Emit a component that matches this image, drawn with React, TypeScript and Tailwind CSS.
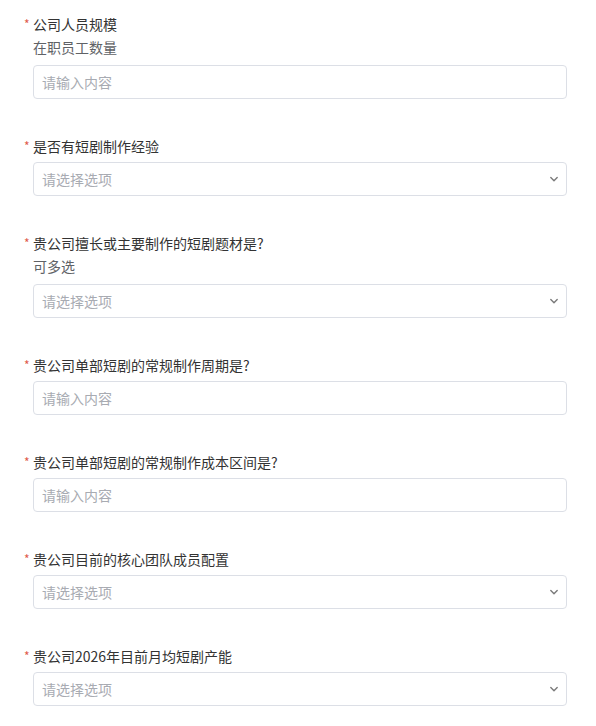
import React from "react";

type Item = { label: string; desc?: string; type: "input" | "select" };

const items: Item[] = [
  { label: "公司人员规模", desc: "在职员工数量", type: "input" },
  { label: "是否有短剧制作经验", type: "select" },
  { label: "贵公司擅长或主要制作的短剧题材是?", desc: "可多选", type: "select" },
  { label: "贵公司单部短剧的常规制作周期是?", type: "input" },
  { label: "贵公司单部短剧的常规制作成本区间是?", type: "input" },
  { label: "贵公司目前的核心团队成员配置", type: "select" },
  { label: "贵公司2026年目前月均短剧产能", type: "select" },
];

function Chevron() {
  return (
    <svg width="12" height="12" viewBox="0 0 12 12" fill="none">
      <path d="M2.8 4.6 L6 7.8 L9.2 4.6" stroke="#7a7a7a" strokeWidth="1.4" strokeLinecap="round" strokeLinejoin="round" />
    </svg>
  );
}

export default function App() {
  return (
    <div
      className="w-[596px] h-[726px] bg-white overflow-hidden pl-[24px] pr-[29px] pt-[14px] flex flex-col gap-[37px]"
      style={{ fontFamily: '"Noto Sans CJK SC", "Noto Sans", sans-serif' }}
    >
      {items.map((it, i) => (
        <div key={i} className="flex flex-col">
          <div className="flex items-center h-[20px] text-[14px] leading-[20px] text-[#333333]">
            <span className="w-[9px] text-[#e05a4a] text-[12px] leading-[20px]">*</span>
            <span>{it.label}</span>
          </div>
          {it.desc && (
            <div className="ml-[9px] mt-[3px] h-[20px] text-[14px] leading-[20px] text-[#606266]">{it.desc}</div>
          )}
          <div
            className={`ml-[9px] ${it.desc ? "mt-[8px]" : "mt-[6px]"} h-[34px] border border-[#dcdfe6] rounded-[4px] flex items-center justify-between pl-[8px] pr-[6px]`}
          >
            <span className="text-[14px] text-[#a8abb2]">
              {it.type === "input" ? "请输入内容" : "请选择选项"}
            </span>
            {it.type === "select" && <Chevron />}
          </div>
        </div>
      ))}
    </div>
  );
}
